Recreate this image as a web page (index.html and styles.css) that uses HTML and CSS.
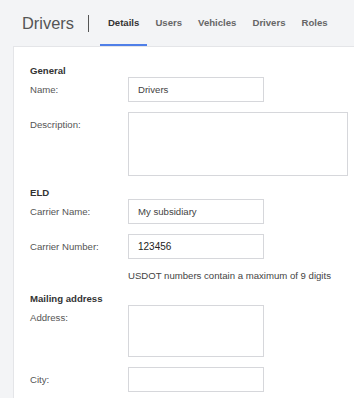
FILE: index.html
```html
<!DOCTYPE html>
<html lang="en">
<head>
<meta charset="utf-8">
<title>Drivers</title>
<link rel="stylesheet" href="styles.css">
</head>
<body>
<header class="topbar">
  <h1 class="page-title">Drivers</h1>
  <span class="divider"></span>
  <nav class="tabs">
    <a class="tab active">Details</a>
    <a class="tab">Users</a>
    <a class="tab">Vehicles</a>
    <a class="tab">Drivers</a>
    <a class="tab">Roles</a>
  </nav>
</header>
<main class="card">
  <div class="section-title">General</div>
  <div class="row">
    <label class="label">Name:</label>
    <input class="field" type="text" value="Drivers">
  </div>
  <div class="row">
    <label class="label">Description:</label>
    <textarea class="field area-wide"></textarea>
  </div>

  <div class="section-title">ELD</div>
  <div class="row">
    <label class="label">Carrier Name:</label>
    <input class="field" type="text" value="My subsidiary">
  </div>
  <div class="row">
    <label class="label">Carrier Number:</label>
    <input class="field number" type="text" value="123456">
  </div>
  <div class="hint">USDOT numbers contain a maximum of 9 digits</div>

  <div class="section-title">Mailing address</div>
  <div class="row">
    <label class="label">Address:</label>
    <textarea class="field area-small"></textarea>
  </div>
  <div class="row last">
    <label class="label">City:</label>
    <input class="field" type="text" value="">
  </div>
</main>
</body>
</html>
```

FILE: styles.css
```css
html, body {
  margin: 0;
  padding: 0;
}
body {
  display: flex;
  flex-direction: column;
  height: 100vh;
  background: #f3f4f6;
  font-family: "Liberation Sans", Arial, sans-serif;
  font-size: 9.6px;
  color: #444;
  overflow: hidden;
}
.topbar {
  display: flex;
  align-items: stretch;
  flex: none;
  height: 46px;
  padding-left: 22px;
}
.page-title {
  margin: 0 0 1px 0;
  align-self: center;
  font-size: 16.4px;
  font-weight: normal;
  color: #555;
  line-height: 20px;
}
.divider {
  align-self: center;
  width: 1px;
  height: 17px;
  background: #555;
  margin: 0 11px 0 14px;
}
.tabs {
  display: flex;
}
.tab {
  display: flex;
  align-items: center;
  height: 44px;
  padding: 0 8px;
  border-bottom: 2px solid transparent;
  font-weight: bold;
  font-size: 9.6px;
  color: #666;
}
.tab.active {
  color: #333;
  border-bottom-color: #4f7fe8;
}
.card {
  flex: 1;
  min-height: 0;
  margin-left: 13px;
  background: #fff;
  border-top: 1px solid #e4e5e8;
  border-left: 1px solid #e4e5e8;
  padding: 17px 0 0 16px;
}
.section-title {
  font-weight: bold;
  color: #333;
  line-height: 13px;
}
.row {
  display: flex;
  align-items: flex-start;
  margin-bottom: 10px;
}
.row.last {
  margin-bottom: 0;
}
.label {
  width: 98px;
  flex: none;
  line-height: 25px;
  color: #555;
}
.field {
  box-sizing: border-box;
  width: 136px;
  height: 25px;
  margin: 0;
  border: 1px solid #d6d7db;
  border-radius: 0;
  padding: 0 9px;
  background: #fff;
  font-family: "Liberation Sans", Arial, sans-serif;
  font-size: 9.6px;
  color: #444;
  outline: none;
  resize: none;
}
.field.number {
  font-size: 10px;
  color: #222;
}
.area-wide {
  width: 220px;
  height: 64px;
}
.area-small {
  height: 52px;
}
.hint {
  margin-left: 98px;
  line-height: 13px;
  color: #444;
  margin-bottom: 10px;
}
```
